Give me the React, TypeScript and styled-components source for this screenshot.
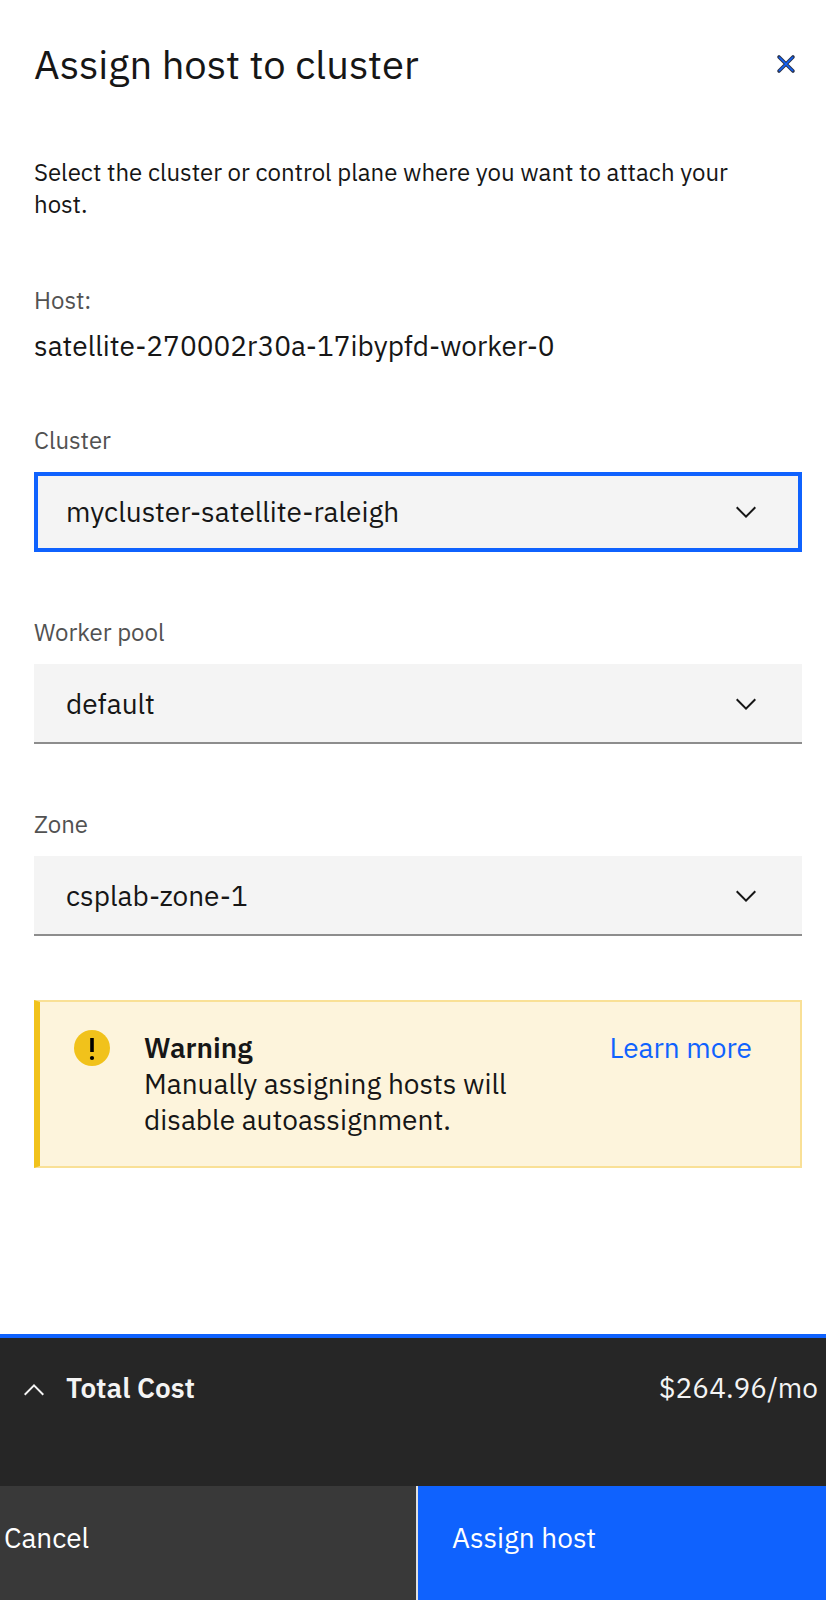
import React, { useState } from 'react';
import styled, { createGlobalStyle, css } from 'styled-components';

const color = {
  text: '#161616',
  label: '#525252',
  blue: '#0f62fe',
  field: '#f4f4f4',
  rule: '#8d8d8d',
  warning: '#f1c21b',
  warningEdge: '#f9e096',
  warningFill: '#fdf4dc',
  bar: '#262626',
  cancel: '#393939',
  divider: '#e0e0e0',
};

const GlobalStyle = createGlobalStyle`
  *, *::before, *::after { box-sizing: border-box; }
  body {
    margin: 0;
    background: #ffffff;
    color: ${color.text};
    font-family: "IBM Plex Sans", "Open Sans", "Liberation Sans", sans-serif;
    font-size: 28px;
    line-height: 36px;
  }
  h1, h2, p, dl, dd { margin: 0; }
  button, select { font: inherit; }
`;

const Panel = styled.form`
  display: flex;
  flex-direction: column;
  min-height: 100vh;
`;

const Body = styled.div`
  flex: 1;
  padding: 40px 24px 64px 34px;
`;

const Header = styled.header`
  display: flex;
  align-items: center;
  justify-content: space-between;
  margin-bottom: 68px;
`;

const Title = styled.h1`
  font-size: 40px;
  font-weight: 400;
  line-height: 48px;
`;

const IconButton = styled.button`
  display: flex;
  align-items: center;
  justify-content: center;
  width: 32px;
  height: 32px;
  padding: 0;
  border: 0;
  background: none;
  cursor: pointer;
`;

const smallText = css`
  font-size: 24px;
  line-height: 32px;
`;

const Description = styled.p`
  ${smallText}
  padding-right: 24px;
`;

const HostDetails = styled.dl`
  margin: 64px 0 60px;
`;

const HostTerm = styled.dt`
  ${smallText}
  color: ${color.label};
`;

const HostName = styled.dd`
  margin-top: 12px;
  overflow-wrap: anywhere;
`;

const Fields = styled.div`
  display: grid;
  gap: 64px;
`;

const FieldLabel = styled.label`
  ${smallText}
  display: block;
  margin-bottom: 16px;
  color: ${color.label};
`;

const SelectBox = styled.div`
  display: grid;
  align-items: center;
  > * { grid-area: 1 / 1; }
  > svg {
    justify-self: end;
    margin-right: 40px;
    pointer-events: none;
  }
`;

const Select = styled.select<{ $active: boolean }>`
  appearance: none;
  width: 100%;
  height: 80px;
  padding: ${p => (p.$active ? '0 92px 0 28px' : '2px 96px 0 32px')};
  border: 0 solid ${p => (p.$active ? color.blue : color.rule)};
  border-width: ${p => (p.$active ? '4px' : '0 0 2px')};
  border-radius: 0;
  outline: none;
  background: ${color.field};
  color: ${color.text};
`;

const Notice = styled.section`
  display: flex;
  align-items: flex-start;
  min-height: 168px;
  margin-top: 64px;
  padding: 28px 48px 28px 34px;
  border: 2px solid ${color.warningEdge};
  border-left: 6px solid ${color.warning};
  background: ${color.warningFill};
  > svg { flex: none; }
`;

const NoticeText = styled.div`
  flex: 1;
  padding: 0 60px 0 34px;
`;

const NoticeTitle = styled.h2`
  font-size: 28px;
  font-weight: 600;
`;

const Link = styled.a`
  flex: none;
  color: ${color.blue};
  text-decoration: none;
`;

const CostBar = styled.div`
  display: flex;
  align-items: flex-start;
  justify-content: space-between;
  min-height: 152px;
  padding: 32px 8px 0 18px;
  border-top: 4px solid ${color.blue};
  background: ${color.bar};
  color: ${color.field};
`;

const CostToggle = styled.button`
  display: flex;
  align-items: center;
  gap: 16px;
  padding: 0;
  border: 0;
  background: none;
  color: inherit;
  font-weight: 600;
  cursor: pointer;
`;

const Actions = styled.div`
  display: grid;
  grid-template-columns: calc(50% + 3px) 1fr;
`;

const ActionButton = styled.button<{ $primary?: boolean }>`
  padding: 34px 4px 44px;
  border: 0;
  background: ${color.cancel};
  color: #ffffff;
  text-align: left;
  cursor: pointer;
  ${p =>
    p.$primary &&
    css`
      padding-left: 34px;
      border-left: 2px solid ${color.divider};
      background: ${color.blue};
    `}
`;

const Chevron = ({ up = false, fill = color.text }: { up?: boolean; fill?: string }) => (
  <svg width="32" height="32" viewBox="0 0 16 16" fill={fill} aria-hidden="true">
    <path
      d={
        up
          ? 'M8 6l5 5-.7.7L8 7.4l-4.3 4.3L3 11z'
          : 'M8 11L3 6l.7-.7L8 9.6l4.3-4.3.7.7z'
      }
    />
  </svg>
);

const CloseIcon = () => (
  <svg width="32" height="32" viewBox="0 0 32 32" fill="none" aria-hidden="true">
    <path d="M9 9l14 14M23 9L9 23" stroke="#2b3550" strokeWidth="3.6" strokeLinecap="round" />
    <path d="M9 9l14 14M23 9L9 23" stroke={color.blue} strokeWidth="1.6" />
  </svg>
);

const WarningIcon = () => (
  <svg width="36" height="36" viewBox="0 0 36 36" aria-hidden="true">
    <circle cx="18" cy="18" r="18" fill={color.warning} />
    <path d="M16.2 8h3.6v14h-3.6z" />
    <circle cx="18" cy="28" r="2.1" />
  </svg>
);

const fields = [
  { id: 'cluster', label: 'Cluster', value: 'mycluster-satellite-raleigh' },
  { id: 'worker-pool', label: 'Worker pool', value: 'default' },
  { id: 'zone', label: 'Zone', value: 'csplab-zone-1' },
];

export default function App() {
  const [active, setActive] = useState('cluster');

  return (
    <>
      <GlobalStyle />
      <Panel onSubmit={e => e.preventDefault()}>
        <Body>
          <Header>
            <Title>Assign host to cluster</Title>
            <IconButton type="button" aria-label="Close">
              <CloseIcon />
            </IconButton>
          </Header>
          <Description>
            Select the cluster or control plane where you want to attach your host.
          </Description>
          <HostDetails>
            <HostTerm>Host:</HostTerm>
            <HostName>satellite-270002r30a-17ibypfd-worker-0</HostName>
          </HostDetails>
          <Fields>
            {fields.map(field => (
              <div key={field.id}>
                <FieldLabel htmlFor={field.id}>{field.label}</FieldLabel>
                <SelectBox>
                  <Select
                    id={field.id}
                    $active={active === field.id}
                    onFocus={() => setActive(field.id)}
                  >
                    <option>{field.value}</option>
                  </Select>
                  <Chevron />
                </SelectBox>
              </div>
            ))}
          </Fields>
          <Notice>
            <WarningIcon />
            <NoticeText>
              <NoticeTitle>Warning</NoticeTitle>
              <p>Manually assigning hosts will disable autoassignment.</p>
            </NoticeText>
            <Link href="#learn-more">Learn more</Link>
          </Notice>
        </Body>
        <footer>
          <CostBar>
            <CostToggle type="button" aria-expanded={false}>
              <Chevron up fill={color.field} />
              Total Cost
            </CostToggle>
            <span>$264.96/mo</span>
          </CostBar>
          <Actions>
            <ActionButton type="button">Cancel</ActionButton>
            <ActionButton type="submit" $primary>
              Assign host
            </ActionButton>
          </Actions>
        </footer>
      </Panel>
    </>
  );
}
